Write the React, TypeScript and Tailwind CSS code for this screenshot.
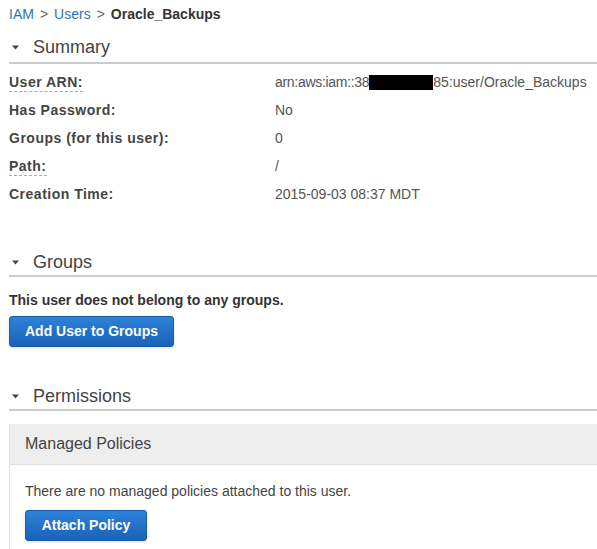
export default function App() {
  const rows = [
    { label: "User ARN:", dashed: true, value: "arn" },
    { label: "Has Password:", dashed: false, value: "No" },
    { label: "Groups (for this user):", dashed: false, value: "0" },
    { label: "Path:", dashed: true, value: "/" },
    { label: "Creation Time:", dashed: false, value: "2015-09-03 08:37 MDT" },
  ]

  const Caret = () => (
    <svg width="7" height="5" viewBox="0 0 7 5" className="mr-[14px] ml-[3px]">
      <path d="M0 0.5 L7 0.5 L3.5 4.5 Z" fill="#444" />
    </svg>
  )

  return (
    <div className="w-[597px] h-[549px] overflow-hidden bg-white text-[#444] font-['Liberation_Sans',Arial,sans-serif] pl-[9px]">
      {/* Breadcrumb */}
      <div className="pt-[6px] text-[14px] leading-[16px]">
        <span className="text-[#2e73b8]">IAM</span>
        <span className="text-[#666] mx-[6px]">&gt;</span>
        <span className="text-[#2e73b8]">Users</span>
        <span className="text-[#666] mx-[6px]">&gt;</span>
        <span className="font-bold text-[#333]">Oracle_Backups</span>
      </div>

      {/* Summary */}
      <div className="mt-[13px] flex items-center h-[24px] text-[18px]">
        <Caret />
        <span>Summary</span>
      </div>
      <div className="h-[2px] bg-[#cccccc] mt-[3px]" />

      <div className="mt-[4px]">
        {rows.map((r) => (
          <div key={r.label} className="flex h-[28px] items-center text-[14px]">
            <div className="w-[266px] font-bold text-[#444] tracking-[0.5px]">
              <span className={r.dashed ? "border-b border-dashed border-[#aaa] pb-[1px]" : ""}>{r.label}</span>
            </div>
            <div className="text-[#555] flex items-center">
              {r.value === "arn" ? (
                <>
                  <span className="tracking-[-0.3px]">arn:aws:iam::38</span>
                  <span className="inline-block w-[64px] h-[15px] bg-black" />
                  <span>85:user/Oracle_Backups</span>
                </>
              ) : (
                r.value
              )}
            </div>
          </div>
        ))}
      </div>

      {/* Groups */}
      <div className="mt-[42px] flex items-center h-[24px] text-[18px]">
        <Caret />
        <span>Groups</span>
      </div>
      <div className="h-[2px] bg-[#cccccc] mt-[1px]" />
      <div className="mt-[13px] text-[14px] font-bold text-[#333]">This user does not belong to any groups.</div>
      <button className="mt-[5px] w-[165px] h-[31px] rounded-[3px] bg-gradient-to-b from-[#2d82d8] to-[#1a62b8] border border-[#1a5aa6] text-white font-bold text-[14px] shadow-sm">
        Add User to Groups
      </button>

      {/* Permissions */}
      <div className="mt-[37px] flex items-center h-[24px] text-[18px]">
        <Caret />
        <span>Permissions</span>
      </div>
      <div className="h-[2px] bg-[#cccccc] mt-[1px]" />

      <div className="mt-[13px] border-l border-[#e0e0e0]">
        <div className="h-[41px] bg-[#eeeeee] border-b border-[#dddddd] flex items-center pl-[15px] text-[16px] text-[#444]">
          Managed Policies
        </div>
        <div className="pl-[15px] pt-[16px] pb-[10px]">
          <div className="text-[14px] text-[#444]">There are no managed policies attached to this user.</div>
          <button className="mt-[8px] w-[122px] h-[31px] rounded-[3px] bg-gradient-to-b from-[#2d82d8] to-[#1a62b8] border border-[#1a5aa6] text-white font-bold text-[14px] shadow-sm">
            Attach Policy
          </button>
        </div>
      </div>
    </div>
  )
}
